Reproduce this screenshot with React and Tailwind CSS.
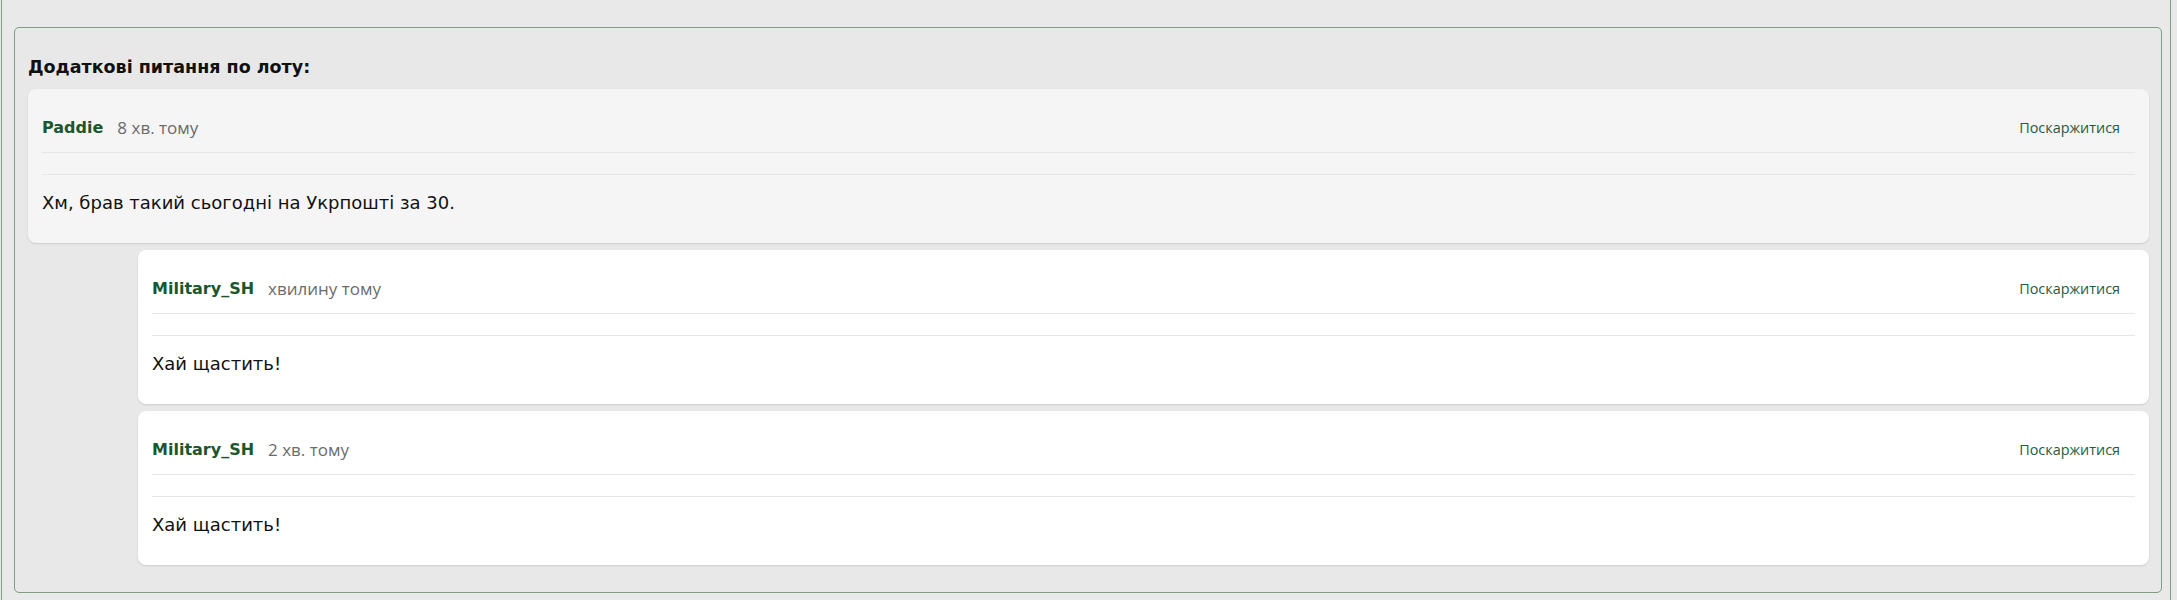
import React from "react";

const comments = [
  { name: "Paddie", time: "8 хв. тому", text: "Хм, брав такий сьогодні на Укрпошті за 30.", reply: false },
  { name: "Military_SH", time: "хвилину тому", text: "Хай щастить!", reply: true },
  { name: "Military_SH", time: "2 хв. тому", text: "Хай щастить!", reply: true },
];

function Card({ c }) {
  return (
    <div
      className={
        "rounded-[8px] px-[14px] pt-[14px] pb-[14px] shadow-[0_1px_2px_rgba(0,0,0,0.12)] " +
        (c.reply ? "ml-[110px] bg-white" : "bg-[#f5f5f5]")
      }
    >
      <div className="h-[50px] flex items-center justify-between border-b border-[#e6e6e6]">
        <div className="flex items-center">
          <span className="font-['DejaVu_Sans',sans-serif] font-bold text-[16px] text-[#1c562c]">{c.name}</span>
          <span className="ml-[14px] font-['Open_Sans',sans-serif] text-[17px] text-[#6b6b6b]">{c.time}</span>
        </div>
        <a className="mr-[15px] font-['Open_Sans',sans-serif] text-[14.4px] text-[#1f5a45]">Поскаржитися</a>
      </div>
      <div className="h-[22px] border-b border-[#e6e6e6]"></div>
      <div className="h-[54px] flex items-center font-['DejaVu_Sans',sans-serif] text-[18px] text-[#111]">{c.text}</div>
    </div>
  );
}

export default function App() {
  return (
    <div className="h-[600px] w-[2177px] overflow-hidden bg-[#e9e9e9]">
      <div className="ml-[1px] w-[2170px] h-full border-x border-[#7f9c86] pl-[12px] pt-[27px]">
        <div className="w-[2148px] h-[566px] rounded-[5px] border border-[#7f9c86] bg-[#e8e8e8] pl-[13px] pr-[12px] pt-[27px]">
          <h2 className="font-['DejaVu_Sans',sans-serif] font-bold text-[17.5px] leading-[24px] text-[#111] mb-[10px]">
            Додаткові питання по лоту:
          </h2>
          <div className="flex flex-col gap-[7px]">
            {comments.map((c, i) => (
              <Card key={i} c={c} />
            ))}
          </div>
        </div>
      </div>
    </div>
  );
}
